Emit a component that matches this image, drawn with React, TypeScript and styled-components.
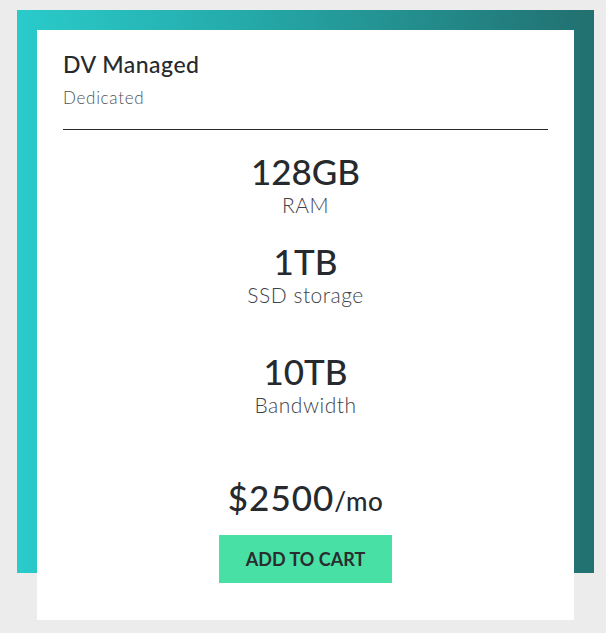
import React from "react";
import styled, { createGlobalStyle } from "styled-components";

const Global = createGlobalStyle`
  html, body { margin: 0; padding: 0; background: #ececec; }
  body { font-family: Lato, "Noto Sans", sans-serif; }
`;

const Page = styled.div`
  padding: 10px 0 0 17px;
  height: 623px;
`;

const Frame = styled.div`
  width: 537px;
  height: 543px;
  padding: 20px 20px 0 20px;
  background: linear-gradient(90deg, #2acbcb 0%, #25a9a9 40%, #227070 100%);
`;

const Card = styled.div`
  background: #ffffff;
  height: 590px;
  box-sizing: border-box;
  padding: 20px 26px 0 26px;
  display: flex;
  flex-direction: column;
`;

const Title = styled.h2`
  margin: 0;
  font-size: 23px;
  font-weight: 500;
  letter-spacing: 0.5px;
  color: #262a2e;
  line-height: 28px;
`;

const Subtitle = styled.div`
  margin-top: 10px;
  font-size: 17px;
  font-weight: 300;
  letter-spacing: 0.7px;
  color: #4f5256;
  line-height: 20px;
`;

const Divider = styled.hr`
  margin: 21px 0 0 0;
  border: none;
  height: 1px;
  background: #2a2a2a;
`;

const Specs = styled.div`
  display: flex;
  flex-direction: column;
  align-items: center;
`;

const Spec = styled.div<{ $gap: number }>`
  display: flex;
  flex-direction: column;
  align-items: center;
  margin-top: ${(p) => p.$gap}px;
`;

const Value = styled.div`
  font-size: 35px;
  font-weight: 500;
  color: #262a2e;
  line-height: 38px;
`;

const Label = styled.div`
  margin-top: 3px;
  font-size: 21px;
  font-weight: 300;
  letter-spacing: 0.5px;
  color: #3e434a;
  line-height: 24px;
`;

const Price = styled.div`
  margin-top: 60px;
  font-size: 35px;
  font-weight: 500;
  letter-spacing: 1px;
  color: #262a2e;
  line-height: 40px;
  text-align: center;
`;

const Per = styled.span`
  font-size: 26px;
  letter-spacing: 0.5px;
`;

const Button = styled.button`
  margin-top: 14px;
  width: 173px;
  height: 48px;
  border: none;
  background: #48e0a5;
  color: #2a2d2f;
  font-family: Lato, "Noto Sans", sans-serif;
  font-weight: 700;
  font-size: 18px;
  cursor: pointer;
`;

export default function App() {
  return (
    <>
      <Global />
      <Page>
        <Frame>
          <Card>
            <Title>DV Managed</Title>
            <Subtitle>Dedicated</Subtitle>
            <Divider />
            <Specs>
              <Spec $gap={22}>
                <Value>128GB</Value>
                <Label>RAM</Label>
              </Spec>
              <Spec $gap={25}>
                <Value>1TB</Value>
                <Label>SSD storage</Label>
              </Spec>
              <Spec $gap={45}>
                <Value>10TB</Value>
                <Label>Bandwidth</Label>
              </Spec>
              <Price>
                $2500<Per>/mo</Per>
              </Price>
              <Button>ADD TO CART</Button>
            </Specs>
          </Card>
        </Frame>
      </Page>
    </>
  );
}
